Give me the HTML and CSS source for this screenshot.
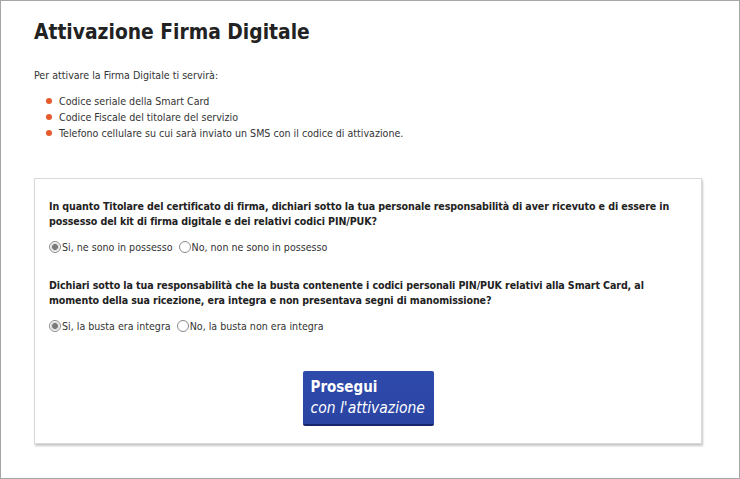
FILE: index.html
```html
<!DOCTYPE html>
<html lang="it">

<head>
    <meta charset="UTF-8">
    <title>Attivazione Firma Digitale</title>
    <link rel="stylesheet" href="styles.css">
</head>

<body>
    <div class="frame">
        <h1>Attivazione Firma Digitale</h1>
        <p class="intro">Per attivare la Firma Digitale ti servirà:</p>
        <ul class="needs">
            <li>Codice seriale della Smart Card</li>
            <li>Codice Fiscale del titolare del servizio</li>
            <li>Telefono cellulare su cui sarà inviato un SMS con il codice di attivazione.</li>
        </ul>

        <form class="box">
            <p class="question">In quanto Titolare del certificato di firma, dichiari sotto la tua personale responsabilità di aver ricevuto e di essere in possesso del kit di firma digitale e dei relativi codici PIN/PUK?</p>
            <div class="choices">
                <label><span class="radio checked"></span>Si, ne sono in possesso</label>
                <label><span class="radio"></span>No, non ne sono in possesso</label>
            </div>

            <p class="question">Dichiari sotto la tua responsabilità che la busta contenente i codici personali PIN/PUK relativi alla Smart Card, al momento della sua ricezione, era integra e non presentava segni di manomissione?</p>
            <div class="choices">
                <label><span class="radio checked"></span>Si, la busta era integra</label>
                <label><span class="radio"></span>No, la busta non era integra</label>
            </div>

            <div class="actions">
                <button type="button" class="go">
                    <strong>Prosegui</strong>
                    <em>con l'attivazione</em>
                </button>
            </div>
        </form>
    </div>
</body>

</html>
```

FILE: styles.css
```css
html,
body {
    margin: 0;
    background: #fff;
}

body {
    font-family: "DejaVu Sans Condensed", "DejaVu Sans", sans-serif;
    font-size: 10.6px;
    color: #333;
}

.frame {
    box-sizing: border-box;
    width: 740px;
    height: 479px;
    border: 1px solid #a6a6a6;
    padding: 19px 37px 0 33px;
}

h1 {
    margin: 0;
    font-size: 20.8px;
    font-weight: bold;
    color: #222;
}

.intro {
    margin: 24px 0 0;
    line-height: 14px;
}

.needs {
    list-style: none;
    margin: 11px 0 0;
    padding: 0 0 0 25px;
}

.needs li {
    position: relative;
    line-height: 16px;
}

.needs li::before {
    content: "";
    position: absolute;
    left: -13px;
    top: 5px;
    width: 6px;
    height: 6px;
    border-radius: 50%;
    background: #e85a2c;
}

.box {
    margin-top: 37px;
    border: 1px solid #d9d9d9;
    box-shadow: 1px 2px 2px #c8c8c8;
    padding: 20px 14px 17px;
}

.question {
    margin: 0;
    font-weight: bold;
    color: #222;
    line-height: 15px;
    letter-spacing: -0.1px;
}

.choices {
    display: flex;
    gap: 6px;
    margin: 11px 0 24px;
    line-height: 14px;
}

.choices label {
    display: flex;
    align-items: center;
}

.radio {
    box-sizing: border-box;
    width: 12px;
    height: 12px;
    border: 1px solid #8a8a8a;
    border-radius: 50%;
    margin-right: 1px;
    background: #fff;
}

.radio.checked {
    background: radial-gradient(circle, #7a7a7a 0 2.6px, #dcdcdc 3.2px 4px, #fff 4.5px);
}

.actions {
    display: flex;
    justify-content: center;
    margin-top: 38px;
}

.go {
    width: 131px;
    height: 55px;
    background: linear-gradient(#2e4aab, #2a44a2);
    border: none;
    border-bottom: 2px solid #16266b;
    border-radius: 2px;
    padding: 5px 8px;
    color: #fff;
    text-align: left;
    font-family: inherit;
    cursor: pointer;
}

.go strong,
.go em {
    display: block;
}

.go strong {
    font-size: 15px;
    line-height: 21px;
}

.go em {
    font-size: 15.5px;
    line-height: 21px;
}
```
